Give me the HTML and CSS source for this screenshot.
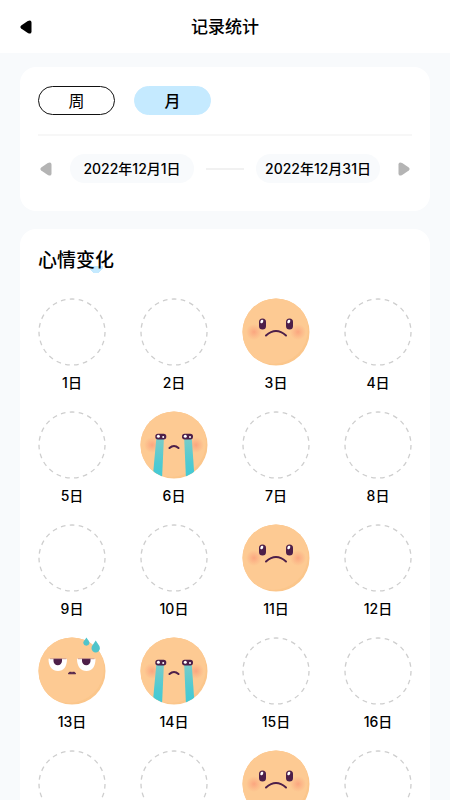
FILE: index.html
```html
<!DOCTYPE html>
<html lang="zh-CN">
<head>
<meta charset="utf-8">
<meta name="viewport" content="width=device-width, initial-scale=1">
<title>记录统计</title>
<link rel="stylesheet" href="styles.css">
</head>
<body>
<svg class="sprite" aria-hidden="true">
  <defs>
    <radialGradient id="blush"><stop offset="0" stop-color="#fa9274" stop-opacity=".65"/><stop offset="1" stop-color="#fa9a78" stop-opacity="0"/></radialGradient>
    <linearGradient id="tear" x1="0" y1="0" x2="0" y2="1"><stop offset="0" stop-color="#7accc8"/><stop offset=".6" stop-color="#4fcad2"/><stop offset="1" stop-color="#3fc9d6"/></linearGradient>
    <clipPath id="face-clip"><circle cx="34" cy="34" r="33.5"/></clipPath>
  </defs>
  <symbol id="arrow" viewBox="0 0 12 14"><path d="M1.2 5.4 7.8 1Q11.4-.7 11.5 2.6V11.4Q11.4 14.7 7.8 13L1.2 8.6Q-.4 7 1.2 5.4Z" fill="currentColor"/></symbol>
  <symbol id="empty" viewBox="0 0 68 68"><circle cx="34" cy="34" r="33" pathLength="230" fill="none" stroke="#cecece" stroke-width="1.3" stroke-dasharray="5.2 4.8"/></symbol>
  <symbol id="base" viewBox="0 0 68 68">
    <circle cx="34" cy="34" r="33.5" fill="#fbc68b"/>
    <circle cx="31" cy="31" r="35" fill="#fdca93" clip-path="url(#face-clip)"/>
  </symbol>
  <symbol id="sad" viewBox="0 0 68 68">
    <use href="#base"/>
    <circle cx="12" cy="34" r="8" fill="url(#blush)"/><circle cx="56" cy="34" r="8" fill="url(#blush)"/>
    <rect x="17" y="20.5" width="7" height="11" rx="3.5" fill="#4d1f49"/><rect x="44" y="20.5" width="7" height="11" rx="3.5" fill="#4d1f49"/>
    <ellipse cx="19.8" cy="23.5" rx="1.4" ry="1.9" fill="#fff" transform="rotate(25 19.8 23.5)"/><ellipse cx="46.8" cy="23.5" rx="1.4" ry="1.9" fill="#fff" transform="rotate(25 46.8 23.5)"/>
    <path d="M24 37.5Q34 28.5 44 37.5" fill="none" stroke="#4d1f49" stroke-width="2" stroke-linecap="round"/>
  </symbol>
  <symbol id="cry" viewBox="0 0 68 68">
    <use href="#base"/>
    <circle cx="12" cy="34" r="8" fill="url(#blush)"/><circle cx="56" cy="34" r="8" fill="url(#blush)"/>
    <g clip-path="url(#face-clip)" fill="url(#tear)"><path d="M16.3 27.5H23.9L22 68H12.6Z"/><path d="M44.2 27.5H51.8L54.6 68H46Z"/></g>
    <rect x="15.3" y="22.7" width="11" height="5.8" rx="2.7" fill="#4d1f49"/><rect x="42" y="22.7" width="11" height="5.8" rx="2.7" fill="#4d1f49"/>
    <circle cx="18.4" cy="25.3" r="1.5" fill="#fff"/><circle cx="23.2" cy="26" r="1" fill="#fff"/><circle cx="45.3" cy="25.3" r="1.5" fill="#fff"/><circle cx="50" cy="26" r="1" fill="#fff"/>
    <path d="M29.5 37Q34 33 38.5 37" fill="none" stroke="#4d1f49" stroke-width="2.1" stroke-linecap="round"/>
  </symbol>
  <symbol id="bored" viewBox="0 0 68 68">
    <use href="#base"/>
    <path d="M10.5 21.8H29C29 30 25.5 34 20 34S10.5 30 10.5 21.8ZM39 21.8H57.5C57.5 30 54 34 48.5 34S39 30 39 21.8Z" fill="#fff"/>
    <path d="M15.5 21.8H24V24A4.25 4.2 0 0 1 15.5 24ZM44 21.8H52.5V24A4.25 4.2 0 0 1 44 24Z" fill="#4d1f49"/>
    <path d="M12 21.8H28.5M40 21.8H56.5" stroke="#a0606a" stroke-width=".5"/>
    <path d="M30.3 36.8Q31 34.6 33 35.2Q34 35.7 35 35.2Q37 34.6 37.7 36.8Z" fill="#4d1f49" stroke="#4d1f49" stroke-width=".8" stroke-linejoin="round"/>
    <path d="M48.4 .5C50 3 51.5 4.3 51.5 6A3.2 3.2 0 0 1 45.2 6C45.2 4.3 47 3 48.4 .5ZM57.7 3.5C59.7 7 61.9 8.5 61.9 11.2A4.2 4.2 0 0 1 53.5 11.2C53.5 8.5 55.7 7 57.7 3.5Z" fill="#50c4cb"/>
  </symbol>
</svg>

<header class="topbar">
  <button class="icon-button back" type="button" aria-label="返回"><svg class="arrow"><use href="#arrow"/></svg></button>
  <h1 class="topbar-title">记录统计</h1>
</header>

<main class="content">
  <section class="card filter" aria-label="统计周期">
    <div class="periods">
      <button class="period" type="button" aria-pressed="false">周</button>
      <button class="period period-active" type="button" aria-pressed="true">月</button>
    </div>
    <div class="range">
      <button class="icon-button" type="button" aria-label="上个月"><svg class="arrow"><use href="#arrow"/></svg></button>
      <div class="dates">
        <button class="date" type="button">2022年12月1日</button>
        <span class="dash"></span>
        <button class="date" type="button">2022年12月31日</button>
      </div>
      <button class="icon-button" type="button" aria-label="下个月"><svg class="arrow arrow-next"><use href="#arrow"/></svg></button>
    </div>
  </section>

  <section class="card moods">
    <h2 class="moods-title">心情变化</h2>
    <ol class="days">
      <li class="day"><svg class="mood"><use href="#empty"/></svg>1日</li>
      <li class="day"><svg class="mood"><use href="#empty"/></svg>2日</li>
      <li class="day"><svg class="mood"><use href="#sad"/></svg>3日</li>
      <li class="day"><svg class="mood"><use href="#empty"/></svg>4日</li>
      <li class="day"><svg class="mood"><use href="#empty"/></svg>5日</li>
      <li class="day"><svg class="mood"><use href="#cry"/></svg>6日</li>
      <li class="day"><svg class="mood"><use href="#empty"/></svg>7日</li>
      <li class="day"><svg class="mood"><use href="#empty"/></svg>8日</li>
      <li class="day"><svg class="mood"><use href="#empty"/></svg>9日</li>
      <li class="day"><svg class="mood"><use href="#empty"/></svg>10日</li>
      <li class="day"><svg class="mood"><use href="#sad"/></svg>11日</li>
      <li class="day"><svg class="mood"><use href="#empty"/></svg>12日</li>
      <li class="day"><svg class="mood"><use href="#bored"/></svg>13日</li>
      <li class="day"><svg class="mood"><use href="#cry"/></svg>14日</li>
      <li class="day"><svg class="mood"><use href="#empty"/></svg>15日</li>
      <li class="day"><svg class="mood"><use href="#empty"/></svg>16日</li>
      <li class="day"><svg class="mood"><use href="#empty"/></svg></li>
      <li class="day"><svg class="mood"><use href="#empty"/></svg></li>
      <li class="day"><svg class="mood"><use href="#sad"/></svg></li>
      <li class="day"><svg class="mood"><use href="#empty"/></svg></li>
    </ol>
  </section>
</main>
</body>
</html>
```

FILE: styles.css
```css
* {
  box-sizing: border-box;
}

body {
  display: flex;
  flex-direction: column;
  height: 100vh;
  margin: 0;
  overflow: hidden;
  background: #f8fafc;
  color: #000;
  font-family: Inter, "Noto Sans CJK SC", sans-serif;
  font-size: 14px;
  font-weight: 500;
}

button {
  padding: 0;
  border: 0;
  background: none;
  color: inherit;
  font: inherit;
  cursor: pointer;
}

.sprite {
  position: absolute;
  width: 0;
  height: 0;
}

.topbar {
  display: grid;
  grid-template-columns: 40px 1fr 40px;
  align-items: center;
  flex: none;
  height: 53px;
  padding: 0 20px;
  background: #fff;
}

.topbar-title {
  margin: 0;
  font-size: 17px;
  font-weight: 500;
  line-height: 24px;
  text-align: center;
}

.icon-button {
  display: flex;
  color: #b4b4b4;
}

.back {
  color: #000;
}

.arrow {
  width: 12px;
  height: 14px;
}

.arrow-next {
  transform: scaleX(-1);
}

.content {
  display: flex;
  flex: 1;
  flex-direction: column;
  gap: 18px;
  min-height: 0;
  padding: 14px 20px;
  overflow-y: auto;
  scrollbar-width: none;
}

.card {
  flex: none;
  padding: 19px 18px;
  border-radius: 16px;
  background: #fff;
}

.filter {
  padding-bottom: 28px;
}

.periods {
  display: flex;
  gap: 19px;
  padding-bottom: 19px;
  border-bottom: 2px solid #f7f7f7;
}

.period {
  width: 77px;
  height: 29px;
  border: 1px solid #111;
  border-radius: 15px;
  font-size: 16px;
  font-weight: 400;
  line-height: 24px;
}

.period-active {
  border-color: #c5eaff;
  background: #c5eaff;
  font-weight: 500;
}

.range {
  display: flex;
  align-items: center;
  justify-content: space-between;
  padding: 18px 2px 0;
}

.dates {
  display: flex;
  align-items: center;
  gap: 12px;
}

.date {
  width: 124px;
  height: 29px;
  padding-bottom: 2px;
  border-radius: 15px;
  background: #f8fafc;
  white-space: nowrap;
}

.dash {
  width: 38px;
  height: 2px;
  background: #f1f1f1;
}

.moods-title {
  width: max-content;
  margin: 0 0 24px;
  background: radial-gradient(circle at 7px 0, #c5eaff 7px, transparent 7px) 51px 18px / 14px 8px no-repeat;
  font-size: 19px;
  font-weight: 500;
  line-height: 26px;
}

.days {
  display: grid;
  grid-template-columns: repeat(4, 68px);
  justify-content: space-between;
  row-gap: 18px;
  margin: 0;
  padding: 0;
  list-style: none;
}

.day {
  display: flex;
  flex-direction: column;
  align-items: center;
  gap: 7px;
  line-height: 20px;
}

.mood {
  width: 68px;
  height: 68px;
}
```
